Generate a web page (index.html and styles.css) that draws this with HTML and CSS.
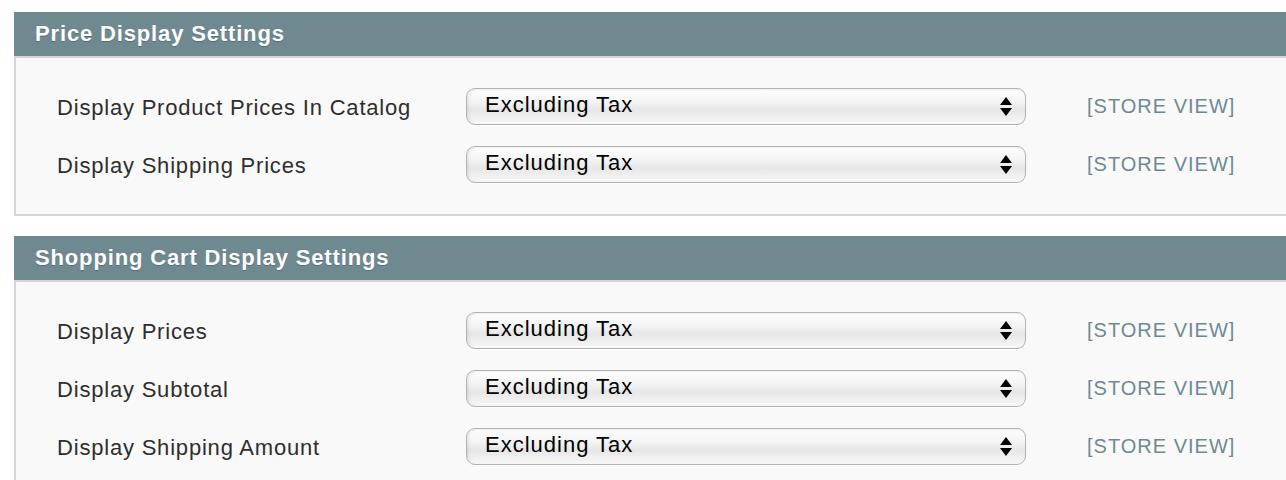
FILE: index.html
```html
<!DOCTYPE html>
<html>
<head>
<meta charset="utf-8">
<link rel="stylesheet" href="styles.css">
</head>
<body>
<div class="page">
  <section class="panel">
    <h2 class="panel-head">Price Display Settings</h2>
    <div class="panel-body">
      <div class="row">
        <span class="label">Display Product Prices In Catalog</span>
        <div class="select"><span class="select-value">Excluding Tax</span><span class="arrows"><i class="up"></i><i class="down"></i></span></div>
        <span class="scope">[STORE VIEW]</span>
      </div>
      <div class="row">
        <span class="label">Display Shipping Prices</span>
        <div class="select"><span class="select-value">Excluding Tax</span><span class="arrows"><i class="up"></i><i class="down"></i></span></div>
        <span class="scope">[STORE VIEW]</span>
      </div>
    </div>
  </section>
  <section class="panel">
    <h2 class="panel-head">Shopping Cart Display Settings</h2>
    <div class="panel-body">
      <div class="row">
        <span class="label">Display Prices</span>
        <div class="select"><span class="select-value">Excluding Tax</span><span class="arrows"><i class="up"></i><i class="down"></i></span></div>
        <span class="scope">[STORE VIEW]</span>
      </div>
      <div class="row">
        <span class="label">Display Subtotal</span>
        <div class="select"><span class="select-value">Excluding Tax</span><span class="arrows"><i class="up"></i><i class="down"></i></span></div>
        <span class="scope">[STORE VIEW]</span>
      </div>
      <div class="row">
        <span class="label">Display Shipping Amount</span>
        <div class="select"><span class="select-value">Excluding Tax</span><span class="arrows"><i class="up"></i><i class="down"></i></span></div>
        <span class="scope">[STORE VIEW]</span>
      </div>
    </div>
  </section>
</div>
</body>
</html>
```

FILE: styles.css
```css
html, body {
  margin: 0;
  padding: 0;
  background: #ffffff;
  font-family: "Liberation Sans", Arial, Helvetica, sans-serif;
  overflow: hidden;
}
.page {
  padding: 12px 0 0 14px;
  display: flex;
  flex-direction: column;
  gap: 20px;
}
.panel {
  display: flex;
  flex-direction: column;
}
.panel-head {
  margin: 0;
  height: 44px;
  box-sizing: border-box;
  padding: 9px 0 0 21px;
  background: #6f8990;
  color: #ffffff;
  font-size: 22px;
  font-weight: bold;
  letter-spacing: 0.85px;
  line-height: 26px;
  text-shadow: 0 1px 0 rgba(40, 60, 66, 0.35);
}
.panel-body {
  background: #f9f9f9;
  border: 2px solid #d6d6d6;
  border-right: none;
  padding: 30px 0 31px 41px;
  display: flex;
  flex-direction: column;
  gap: 21px;
}
.row {
  display: grid;
  grid-template-columns: 409px 560px auto;
  align-items: center;
  height: 37px;
}
.label {
  font-size: 22px;
  letter-spacing: 0.8px;
  color: #2e2e2e;
  line-height: 24px;
  padding-top: 2px;
}
.select {
  height: 37px;
  box-sizing: border-box;
  border: 1px solid #b2b2b2;
  border-radius: 9px;
  background: linear-gradient(#ffffff 0%, #f2f2f2 40%, #e6e6e6 60%, #f8f8f8 100%);
  box-shadow: inset 2px 1px 3px rgba(0,0,0,0.07), 0 1px 0 rgba(255,255,255,0.8);
  display: flex;
  align-items: center;
  justify-content: space-between;
  padding: 0 13px 0 18px;
}
.select-value {
  font-size: 22px;
  letter-spacing: 1px;
  color: #000000;
  line-height: 24px;
  margin-top: -4px;
}
.arrows {
  display: flex;
  flex-direction: column;
  gap: 3px;
  align-items: center;
}
.arrows i {
  display: block;
  width: 0;
  height: 0;
  border-left: 6px solid transparent;
  border-right: 6px solid transparent;
}
.arrows .up {
  border-bottom: 8px solid #000;
}
.arrows .down {
  border-top: 8px solid #000;
}
.scope {
  margin-left: 61px;
  font-size: 20px;
  letter-spacing: 1px;
  color: #6d8a94;
  line-height: 24px;
  margin-top: -2px;
}
```
